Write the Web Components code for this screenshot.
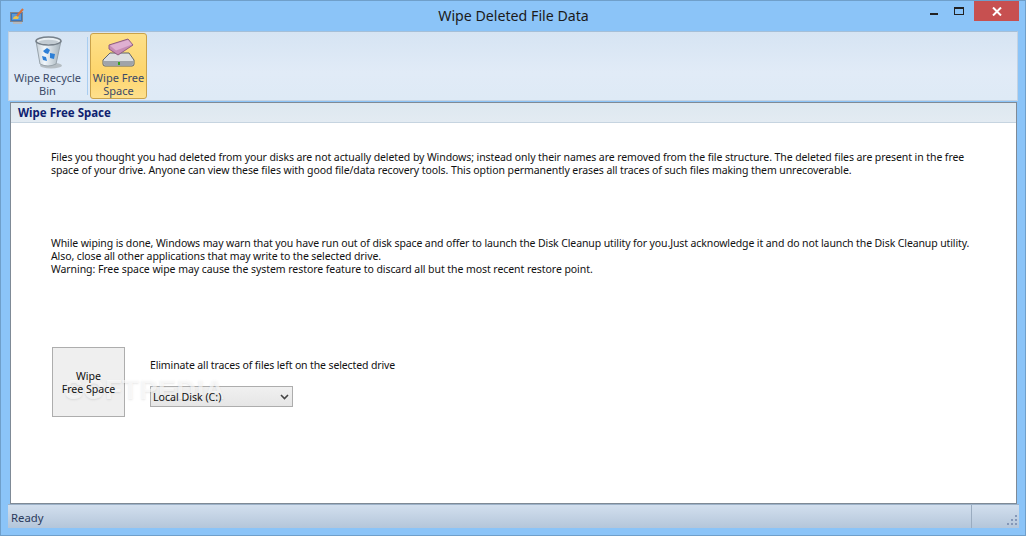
<!DOCTYPE html>
<html><head><meta charset="utf-8"><style>
html,body{margin:0;padding:0;width:1026px;height:536px;overflow:hidden}
body{font-family:"Noto Sans","DejaVu Sans",sans-serif;font-size:10.5px;color:#111}
</style></head><body>
<template id="t-win"><style>
:host{display:flex;flex-direction:column;box-sizing:border-box;width:1026px;height:536px;background:#8bc4f8;border:1px solid #6f9fca;padding:0 7px 7px 7px}
</style><slot name="title"></slot><slot name="toolbar"></slot><slot name="panel"></slot><slot name="status"></slot></template>

<template id="t-title"><style>
:host{display:flex;align-items:flex-start;height:30px;flex:none;margin-right:-1px;position:relative}
.ic{width:16px;height:16px;margin:7px 0 0 2px;flex:none}
.t{position:absolute;left:0;right:0;top:5px;text-align:center;font:14.2px "Noto Sans",sans-serif;color:#1b1b1b}
.btns{margin-left:auto;display:flex;height:21px;align-items:flex-start;position:relative}
.min,.max{width:30px;height:21px;display:flex;justify-content:center}
.min i{display:block;width:8px;height:2px;background:#222;margin-top:12px;margin-left:10px}
.max i{display:block;box-sizing:border-box;width:10px;height:8px;border:1px solid #222;border-top-width:2px;margin-top:6px}
.x{width:45px;height:20px;background:#c75050;display:flex;align-items:center;justify-content:center}
</style>
<svg class="ic" viewBox="0 0 16 16"><rect x=".5" y="4.500" width="12" height="9" fill="#3b74b8" stroke="#80858e"/><rect x="2" y="6" width="9" height="6" fill="#5c9ad8"/><path d="M3 11c0-3 4-4 6-2l-1 2z" fill="#efc24a"/><rect x="3" y="14" width="9" height="2" fill="#b4b8bf"/><path d="M7 8 13 1" stroke="#d9703a" stroke-width="2"/></svg>
<div class="t"><slot></slot></div>
<div class="btns"><div class="min"><i></i></div><div class="max"><i></i></div><div class="x"><svg width="10" height="9" viewBox="0 0 10 9"><path d="M1 .5 9 8.500M9 .5 1 8.500" stroke="#fff" stroke-width="2"/></svg></div></div>
</template>

<template id="t-toolbar"><style>
:host{display:flex;flex:none;height:70px;box-sizing:border-box;background:linear-gradient(#d6e4f3,#e1ebf7 60%,#deeaf6);border:1px solid #c3d2e2;border-top-color:#a5bfd8;padding:1px 0 0 1px;align-items:flex-start}
</style><slot></slot></template>

<template id="t-tool"><style>
:host{display:flex;flex-direction:column;align-items:center;flex:none;box-sizing:border-box;height:66px;border:1px solid transparent;border-radius:3px;color:#3b4a68;text-align:center;line-height:13px;font-size:11px}
:host([active]){background:linear-gradient(#fde08a,#fdd56c 60%,#fee08c);border-color:#c9a24a}
.i{height:33px;flex:none;margin-top:2px;display:flex;justify-content:center}
.l{margin-top:2px;white-space:pre-line}
</style><div class="i"><slot name="icon"></slot></div><div class="l"><slot></slot></div></template>

<template id="t-sep"><style>
:host{display:block;flex:none;width:1px;height:58px;background:#a9cdf0;margin:4px 2px 0 2px}
</style></template>

<template id="t-panel"><style>
:host{display:flex;flex-direction:column;flex:1;min-height:0;box-sizing:border-box;margin:1px 1px 0 2px;border:1px solid #7f8a96;background:#fff}
.h{height:19px;flex:none;background:linear-gradient(#dde8f0,#e3ebf2);border-bottom:1px solid #c6d4e0;padding-left:7px;font-weight:700;font-size:11.5px;line-height:19px;color:#0f2270}
.b{flex:1;min-height:0;display:flex;flex-direction:column;padding:0 0 0 40px}
</style><div class="h"><slot name="head"></slot></div><div class="b"><slot></slot></div></template>

<template id="t-para"><style>
:host{display:flex;flex-direction:column;font-size:10.5px;line-height:13px;color:#111;white-space:nowrap}
</style><slot></slot></template>

<template id="t-action"><style>
:host{display:flex;align-items:flex-start;gap:25px;margin-left:1px;position:relative}
.b{box-sizing:border-box;width:73px;height:70px;flex:none;background:#efefef;border:1px solid #adadad;display:flex;align-items:center;justify-content:center;text-align:center;line-height:13px;white-space:pre-line;font-size:10.6px;padding-top:1px}
.r{padding-top:11px}
.s{box-sizing:border-box;width:143px;height:21px;margin-top:14px;background:linear-gradient(#f0f0f0,#e6e6e6);border:1px solid #adadad;display:flex;align-items:center;justify-content:space-between;padding:1px 3px 0 2px;font-size:10.6px}
.top{position:relative;z-index:2}
.w{position:absolute;z-index:1;left:13px;top:28px;font:700 27px/30px "Liberation Sans",sans-serif;letter-spacing:.6px;color:rgba(255,255,255,.62);text-shadow:0 1px 2px rgba(120,120,120,.16);pointer-events:none;white-space:nowrap}
</style><div class="b"><div class="top"><slot name="btn"></slot></div></div><div class="r"><div style="letter-spacing:-.127px"><slot name="label"></slot></div><div class="s"><div class="top"><slot name="sel"></slot></div><svg class="top" width="9" height="6" viewBox="0 0 9 6"><path d="M1 1 4.500 4.500 8 1" fill="none" stroke="#444" stroke-width="1.600"/></svg></div></div><div class="w"><slot name="mark"></slot></div></template>

<template id="t-status"><style>
:host{display:flex;flex:none;height:24px;margin-right:-1px;box-sizing:border-box;background:linear-gradient(#d2dfee,#b4c6da);border-top:1px solid #9db2c8;align-items:center;font-size:11.3px;color:#2b3a5c;padding-left:3px}
.r{padding-top:2px}
.g{margin-left:auto;width:48px;height:100%;border-left:1px solid #9aacc0;box-sizing:border-box;display:flex;align-items:flex-end;justify-content:flex-end;padding:0 1px 2px 0}
</style><div class="r"><slot></slot></div><div class="g"><svg width="11" height="11" viewBox="0 0 11 11" fill="#8497b8"><rect x="8" y="0" width="2" height="2"/><rect x="4" y="4" width="2" height="2"/><rect x="8" y="4" width="2" height="2"/><rect x="0" y="8" width="2" height="2"/><rect x="4" y="8" width="2" height="2"/><rect x="8" y="8" width="2" height="2"/></svg></div></template>

<wd-window>
<wd-title slot="title">Wipe Deleted File Data</wd-title>
<wd-toolbar slot="toolbar">
<wd-tool style="width:75px"><svg slot="icon" width="30" height="33" viewBox="0 0 30 33"><defs><linearGradient id="g1" x1="0" x2="1"><stop offset="0" stop-color="#c4ced6"/><stop offset=".35" stop-color="#f0f6fb"/><stop offset="1" stop-color="#a3b0b9"/></linearGradient></defs><ellipse cx="18" cy="29.500" rx="11" ry="3" fill="#b6bec4"/><path d="M3 5 7 28Q15 32 23 28L28 5z" fill="url(#g1)" stroke="#98a3ab"/><ellipse cx="15.500" cy="5" rx="12.500" ry="4" fill="#e9eff3" stroke="#76808a" stroke-width="1.500"/><ellipse cx="15.500" cy="6" rx="10" ry="2.200" fill="#c3ccd3"/><path d="M10 15l4-3 3 2-2 4-3-1zM17 17l5 1-1 5-4-1zM9 20l4 1 1 4-4-1z" fill="#2d7fd6"/></svg>Wipe Recycle
Bin</wd-tool>
<wd-sep></wd-sep>
<wd-tool active style="width:57px"><svg slot="icon" width="33" height="30" viewBox="0 0 33 30" style="margin-top:1px"><path d="M1 23 8 16H27L32 23V27Q32 29 30 29H3Q1 29 1 27Z" fill="#dcdfe1" stroke="#5f6468"/><path d="M2 24H31V27Q31 28 30 28H3Q2 28 2 27Z" fill="#a0a4a9"/><rect x="16" y="25" width="2" height="3" fill="#36a11f"/><path d="M7 8 26 2 31 8 16 18 7 12Z" fill="#c78db6" stroke="#8e5f82" stroke-linejoin="round"/><path d="M8 8.500 26 3 30 7.500 14 13.500Z" fill="#dfb0d1"/></svg>Wipe Free
Space</wd-tool>
</wd-toolbar>
<wd-panel slot="panel"><span slot="head">Wipe Free Space</span>
<wd-para style="margin-top:28px"><span style="letter-spacing:-.088px">Files you thought you had deleted from your disks are not actually deleted by Windows; instead only their names are removed from the file structure. The deleted files are present in the free</span><span style="letter-spacing:-.089px">space of your drive. Anyone can view these files with good file/data recovery tools. This option permanently erases all traces of such files making them unrecoverable.</span></wd-para>
<wd-para style="margin-top:60px"><span style="letter-spacing:-.11px">While wiping is done, Windows may warn that you have run out of disk space and offer to launch the Disk Cleanup utility for you.Just acknowledge it and do not launch the Disk Cleanup utility.</span><span style="letter-spacing:-.1px">Also, close all other applications that may write to the selected drive.</span><span style="letter-spacing:-.065px">Warning: Free space wipe may cause the system restore feature to discard all but the most recent restore point.</span></wd-para>
<wd-action style="margin-top:71px"><span slot="btn">Wipe
Free Space</span><span slot="label">Eliminate all traces of files left on the selected drive</span><span slot="sel">Local Disk (C:)</span><span slot="mark">SOFTPEDIA</span></wd-action>
</wd-panel>
<wd-status slot="status">Ready</wd-status>
</wd-window>
<script>
for(const [n,id] of [['wd-window','t-win'],['wd-title','t-title'],['wd-toolbar','t-toolbar'],['wd-tool','t-tool'],['wd-sep','t-sep'],['wd-panel','t-panel'],['wd-para','t-para'],['wd-action','t-action'],['wd-status','t-status']]){
customElements.define(n,class extends HTMLElement{constructor(){super();this.attachShadow({mode:'open'}).appendChild(document.getElementById(id).content.cloneNode(true))}});
}
</script>
</body></html>
